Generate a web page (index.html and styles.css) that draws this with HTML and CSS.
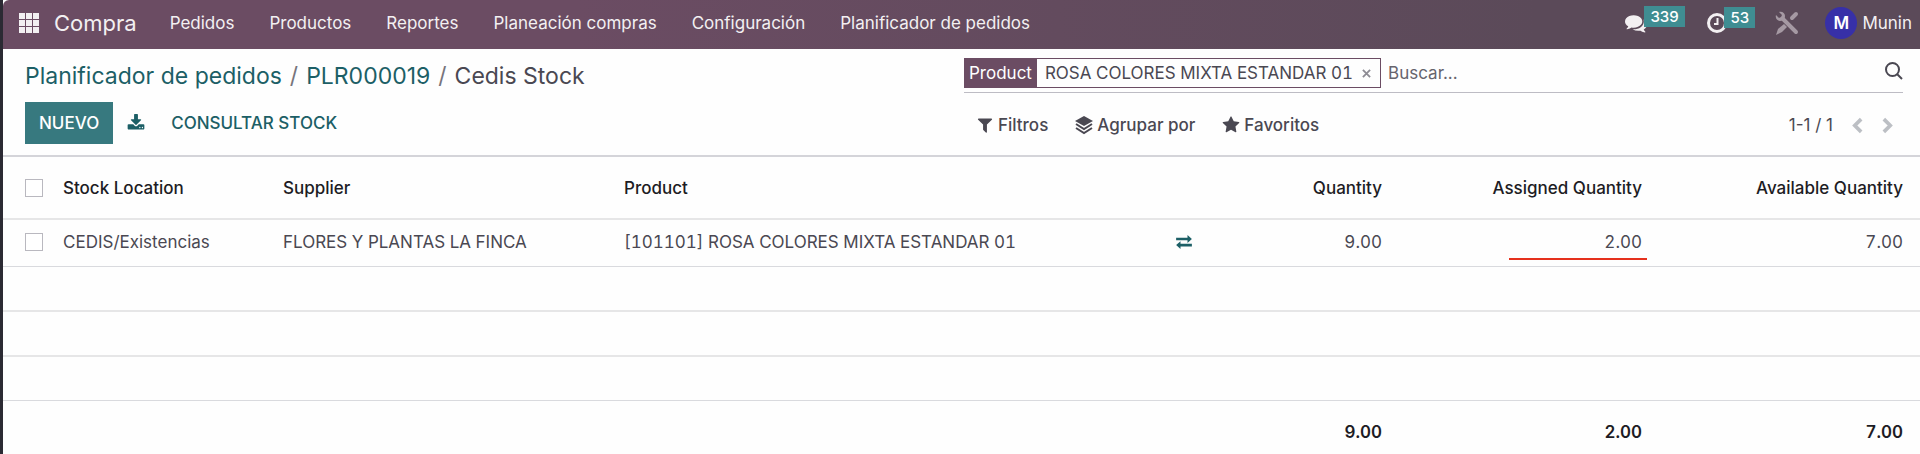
FILE: index.html
```html
<!doctype html>
<html lang="es">
<head>
<meta charset="utf-8">
<title>Cedis Stock</title>
<link rel="stylesheet" href="styles.css">
</head>

<body>
	<header class="navbar">
		<button class="apps" aria-label="Aplicaciones">
			<svg viewBox="0 0 20 20"><path d="M0 0h6v6H0zM7 0h6v6H7zM14 0h6v6h-6zM0 7h6v6H0zM7 7h6v6H7zM14 7h6v6h-6zM0 14h6v6H0zM7 14h6v6H7zM14 14h6v6h-6z"/></svg>
		</button>
		<a href="#" class="brand">Compra</a>
		<nav class="menu">
			<a href="#">Pedidos</a>
			<a href="#">Productos</a>
			<a href="#">Reportes</a>
			<a href="#">Planeación compras</a>
			<a href="#">Configuración</a>
			<a href="#">Planificador de pedidos</a>
		</nav>
		<div class="systray">
			<button class="chat" aria-label="Mensajes">
				<svg viewBox="0 0 1792 1792"><path d="M1408 768q0 139-94 257t-256.500 186.500-353.500 68.500q-86 0-176-16-124 88-278 128-36 9-86 16h-3q-11 0-20.500-8t-11.500-21q-1-3-1-6.500t.5-6.500 2-6l2.500-5 3.500-5.500 4-5 4.500-5 4-4.500q5-6 23-25t26-29.500 22.500-29 25-38.500 20.500-44q-124-72-195-177t-71-224q0-139 94-257t256.500-186.500 353.500-68.500 353.500 68.500 256.500 186.500 94 257zm384 256q0 120-71 224.500t-195 176.500q10 24 20.500 44t25 38.500 22.500 29 26 29.500 23 25q1 1 4 4.500t4.500 5 4 5 3.500 5.500l2.500 5 2 6 .5 6.500-1 6.500q-3 14-13 22t-22 7q-50-7-86-16-154-40-278-128-90 16-176 16-271 0-472-132 58 4 88 4 161 0 309-45t264-129q125-92 192-212t67-254q0-77-23-152 129 71 204 178t75 230z"/></svg>
				<span class="badge">339</span>
			</button>
			<button class="clock" aria-label="Actividades">
				<svg viewBox="0 0 20 20"><circle cx="10" cy="10" r="8.500"/><path d="M10.500 5v6H7"/></svg>
				<span class="badge">53</span>
			</button>
			<button class="tools" aria-label="Herramientas">
				<svg viewBox="0 0 24 24">
					<path class="line" d="M8 8l13 13"/>
					<path d="M4 1l3 3-1 2-2 1-3-3c-1 3 1 6 4 6 4 0 5-3 5-5 0-3-3-5-6-4z"/>
					<path class="line" d="M21 3l-4 4"/>
					<path d="M9 13l3 3-5 5-6 3 2-6z"/>
				</svg>
			</button>
			<button class="user"><span class="avatar">M</span>Munin</button>
		</div>
	</header>

	<section class="panel">
		<div class="panel-left">
			<div class="crumbs">
				<a href="#">Planificador de pedidos</a><i>/</i><a href="#">PLR000019</a><i>/</i><span>Cedis Stock</span>
			</div>
			<div class="actions">
				<button class="primary">NUEVO</button>
				<button class="export" aria-label="Exportar">
					<svg viewBox="0 0 1792 1792"><path d="M1344 1344q0-26-19-45t-45-19-45 19-19 45 19 45 45 19 45-19 19-45zm256 0q0-26-19-45t-45-19-45 19-19 45 19 45 45 19 45-19 19-45zm128-224v320q0 40-28 68t-68 28h-1472q-40 0-68-28t-28-68v-320q0-40 28-68t68-28h465l135 136q58 56 136 56t136-56l136-136h464q40 0 68 28t28 68zm-325-569q17 41-14 70l-448 448q-18 19-45 19t-45-19l-448-448q-31-29-14-70 17-39 59-39h256v-448q0-26 19-45t45-19h256q26 0 45 19t19 45v448h256q42 0 59 39z"/></svg>
				</button>
				<button class="link">CONSULTAR STOCK</button>
			</div>
		</div>
		<div class="panel-right">
			<div class="search">
				<div class="facet">
					<span class="facet-label">Product</span>
					<span class="facet-value">ROSA COLORES MIXTA ESTANDAR 01</span>
					<button class="remove" aria-label="Quitar">
						<svg viewBox="0 0 10 10"><path d="M1 1l8 8M9 1L1 9"/></svg>
					</button>
				</div>
				<input type="text" placeholder="Buscar..." aria-label="Buscar">
				<button class="magnifier" aria-label="Buscar">
					<svg viewBox="0 0 18 18"><circle cx="7.500" cy="7.500" r="6.500"/><path d="M12 12l5 5"/></svg>
				</button>
			</div>
			<div class="options">
				<button>
					<svg class="filter" viewBox="0 0 1792 1792"><path d="M1595 295q17 41-14 70l-493 493v742q0 42-39 59-13 5-25 5-27 0-45-19l-256-256q-19-19-19-45v-486l-493-493q-31-29-14-70 17-39 59-39h1280q42 0 59 39z"/></svg>Filtros
				</button>
				<button>
					<svg viewBox="0 0 18 18"><path d="M9 0l9 5-9 5-9-5z"/><path class="line" d="M1 8l8 5 8-5M1 12l8 5 8-5"/></svg>Agrupar por
				</button>
				<button>
					<svg viewBox="0 0 1792 1792"><path d="M1728 647q0 22-26 48l-363 354 86 500q1 7 1 20 0 21-10.500 35.500t-30.500 14.500q-19 0-40-12l-449-236-449 236q-22 12-40 12-21 0-31.500-14.500t-10.500-35.500q0-6 2-20l86-500-364-354q-25-27-25-48 0-37 56-46l502-73 225-455q19-41 49-41t49 41l225 455 502 73q56 9 56 46z"/></svg>Favoritos
				</button>
				<div class="pager">
					<span>1-1 / 1</span>
					<button aria-label="Anterior"><svg viewBox="0 0 12 18"><path d="M10 2L3 9l7 7"/></svg></button>
					<button aria-label="Siguiente"><svg viewBox="0 0 12 18"><path d="M2 2l7 7-7 7"/></svg></button>
				</div>
			</div>
		</div>
	</section>

	<table class="list">
		<colgroup>
			<col class="c-check"><col class="c-location"><col class="c-supplier"><col><col class="c-icon"><col class="c-qty"><col class="c-assigned"><col class="c-available">
		</colgroup>
		<thead>
			<tr>
				<th><input type="checkbox" aria-label="Seleccionar todo"></th>
				<th>Stock Location</th>
				<th>Supplier</th>
				<th>Product</th>
				<th></th>
				<th class="num">Quantity</th>
				<th class="num">Assigned Quantity</th>
				<th class="num">Available Quantity</th>
			</tr>
		</thead>
		<tbody>
			<tr class="record">
				<td><input type="checkbox" aria-label="Seleccionar CEDIS/Existencias"></td>
				<td>CEDIS/Existencias</td>
				<td>FLORES Y PLANTAS LA FINCA</td>
				<td>[101101] ROSA COLORES MIXTA ESTANDAR 01</td>
				<td>
					<button class="swap" aria-label="Transferir">
						<svg viewBox="0 0 18 16"><path d="M0 3h13V0l5 4.500L13 9V6H0zM18 10H5V7l-5 4.500L5 16v-3h13z"/></svg>
					</button>
				</td>
				<td class="num">9.00</td>
				<td class="num"><span class="marked">2.00</span></td>
				<td class="num">7.00</td>
			</tr>
			<tr class="thick"><td colspan="8"></td></tr>
			<tr class="thick"><td colspan="8"></td></tr>
			<tr><td colspan="8"></td></tr>
		</tbody>
		<tfoot>
			<tr>
				<td colspan="5"></td>
				<td class="num">9.00</td>
				<td class="num">2.00</td>
				<td class="num">7.00</td>
			</tr>
		</tfoot>
	</table>
</body>
</html>
```
FILE: styles.css
```css
*{
	margin: 0;
	padding: 0;
	box-sizing: border-box;
}
html{
	background: #fefefe;
}
body{
	min-height: 100vh;
	border-left: 3px solid #2b2a33;
	font: 17px/24px Inter, "Liberation Sans", sans-serif;
	color: #4a4852;
	overflow: hidden;
}
button{
	border: 0;
	background: none;
	font: inherit;
	color: inherit;
	display: flex;
	align-items: center;
	white-space: nowrap;
}
a{
	text-decoration: none;
	color: inherit;
}
svg{
	display: block;
	flex: none;
	fill: currentColor;
	overflow: visible;
}

/* navbar */
.navbar{
	height: 49px;
	padding: 0 8px 4px 16px;
	display: flex;
	align-items: center;
	background: linear-gradient(90deg, #6b4c63 30%, #5b4a59 80%);
	border-radius: 6px 0 0 0;
	color: #f3f0f2;
	white-space: nowrap;
}
.apps svg{
	width: 20px;
	height: 20px;
}
.brand{
	margin-left: 15px;
	font-size: 22px;
}
.menu{
	margin-left: 33px;
	display: flex;
	gap: 35px;
}
.systray{
	margin-left: auto;
	display: flex;
	align-items: center;
}
.systray button{
	position: relative;
}
.badge{
	position: absolute;
	left: 19px;
	top: -6px;
	height: 21px;
	padding: 0 6px;
	background: #3f8d92;
	font-size: 15px;
	font-weight: 500;
	line-height: 21px;
	color: #fff;
}
.chat{
	width: 82px;
}
.chat svg{
	width: 22px;
	height: 22px;
}
.clock{
	width: 68px;
}
.clock svg{
	width: 20px;
	height: 20px;
	fill: none;
	stroke: currentColor;
	stroke-width: 3;
}
.clock path{
	stroke-width: 2;
}
.clock .badge{
	left: 17px;
}
.tools{
	width: 50px;
	color: #a599a3;
}
.tools svg{
	width: 24px;
	height: 24px;
}
.tools .line{
	stroke: currentColor;
	stroke-width: 4;
	stroke-linecap: round;
}
.user{
	gap: 5px;
}
.avatar{
	width: 32px;
	height: 32px;
	border-radius: 50%;
	background: #3730a8;
	font-weight: 600;
	line-height: 32px;
	color: #fff;
}

/* control panel */
.panel{
	height: 108px;
	padding: 9px 17px 0 22px;
	display: flex;
	border-bottom: 2px solid #d4d4d9;
}
.panel-left{
	flex: 1;
}
.panel-right{
	width: 50%;
}
.crumbs{
	height: 44px;
	font-size: 23px;
	line-height: 36px;
	color: #4a4852;
	white-space: nowrap;
}
.crumbs a{
	color: #1c5f66;
}
.crumbs i{
	margin: 0 8px;
	font-style: normal;
	color: #77747c;
}
.actions{
	display: flex;
	align-items: center;
	color: #1c5f66;
	font-weight: 500;
}
.primary{
	height: 42px;
	padding: 0 14px;
	background: #37797f;
	color: #fff;
}
.export{
	margin-left: 14px;
}
.export svg{
	width: 18px;
	height: 18px;
}
.link{
	margin-left: 26px;
}
.search{
	height: 35px;
	display: flex;
	align-items: flex-start;
	border-bottom: 1px solid #bdbcc4;
}
.facet{
	height: 30px;
	display: flex;
	border: 1px solid #6b4c63;
	line-height: 28px;
	font-variant-numeric: tabular-nums;
	white-space: nowrap;
}
.facet-label{
	padding: 0 5px 0 4px;
	background: #6b4c63;
	color: #fff;
}
.facet-value{
	padding-left: 8px;
}
.remove{
	padding: 0 9px;
}
.remove svg{
	width: 9px;
	height: 9px;
	stroke: #8e8c94;
	stroke-width: 2;
}
.search input{
	flex: 1;
	min-width: 0;
	height: 30px;
	padding: 0 7px;
	border: 0;
	outline: 0;
	background: none;
	font: inherit;
	color: inherit;
}
.search input::placeholder{
	color: #66646d;
	opacity: 1;
}
.magnifier{
	height: 26px;
}
.magnifier svg{
	width: 18px;
	height: 18px;
	fill: none;
	stroke: currentColor;
	stroke-width: 2;
}
.options{
	height: 64px;
	padding: 0 10px 0 12px;
	display: flex;
	align-items: center;
	gap: 27px;
	font-weight: 500;
}
.options > button{
	gap: 4px;
}
.options > button svg{
	width: 18px;
	height: 18px;
}
.options .line{
	fill: none;
	stroke: currentColor;
	stroke-width: 2;
}
.pager{
	margin-left: auto;
	display: flex;
	align-items: center;
	gap: 19px;
	font-weight: 400;
}
.pager svg{
	width: 11px;
	height: 17px;
	fill: none;
	stroke: #bcbfc4;
	stroke-width: 4;
}

/* list */
.list{
	width: 100%;
	table-layout: fixed;
	border-collapse: separate;
	border-spacing: 0;
	font-variant-numeric: tabular-nums;
}
.c-check{
	width: 50px;
}
.c-location{
	width: 220px;
}
.c-supplier{
	width: 341px;
}
.c-icon{
	width: 60px;
}
.c-qty{
	width: 167px;
}
.c-assigned{
	width: 260px;
}
.c-available{
	width: 268px;
}
.list th, .list td{
	padding: 0 10px;
	border-bottom: 1px solid #d9dade;
	text-align: left;
	white-space: nowrap;
}
.list th{
	height: 63px;
	border-bottom: 2px solid #e6e6e7;
	font-weight: 500;
	color: #1d1c24;
}
.list td{
	height: 44px;
}
.list .record td{
	height: 47px;
	padding-bottom: 3px;
}
.list .thick td{
	height: 45px;
	border-bottom: 2px solid #e6e6e7;
}
.list th:first-child, .list td:first-child{
	padding-left: 22px;
}
.list th:last-child, .list td:last-child{
	padding-right: 17px;
}
.list .num{
	text-align: right;
}
.list tfoot td{
	height: 61px;
	border-bottom: 0;
	font-weight: 600;
	color: #1d1c24;
}
.list input{
	display: block;
	appearance: none;
	width: 18px;
	height: 18px;
	border: 1px solid #b9b8bf;
	background: #fff;
}
.swap{
	color: #1c5f66;
}
.swap svg{
	width: 18px;
	height: 14px;
}
.marked{
	position: relative;
}
/* red underline below the assigned amount */
.marked::after{
	content: "";
	position: absolute;
	right: -5px;
	bottom: -8px;
	width: 138px;
	height: 2px;
	background: #e5311d;
}
```
